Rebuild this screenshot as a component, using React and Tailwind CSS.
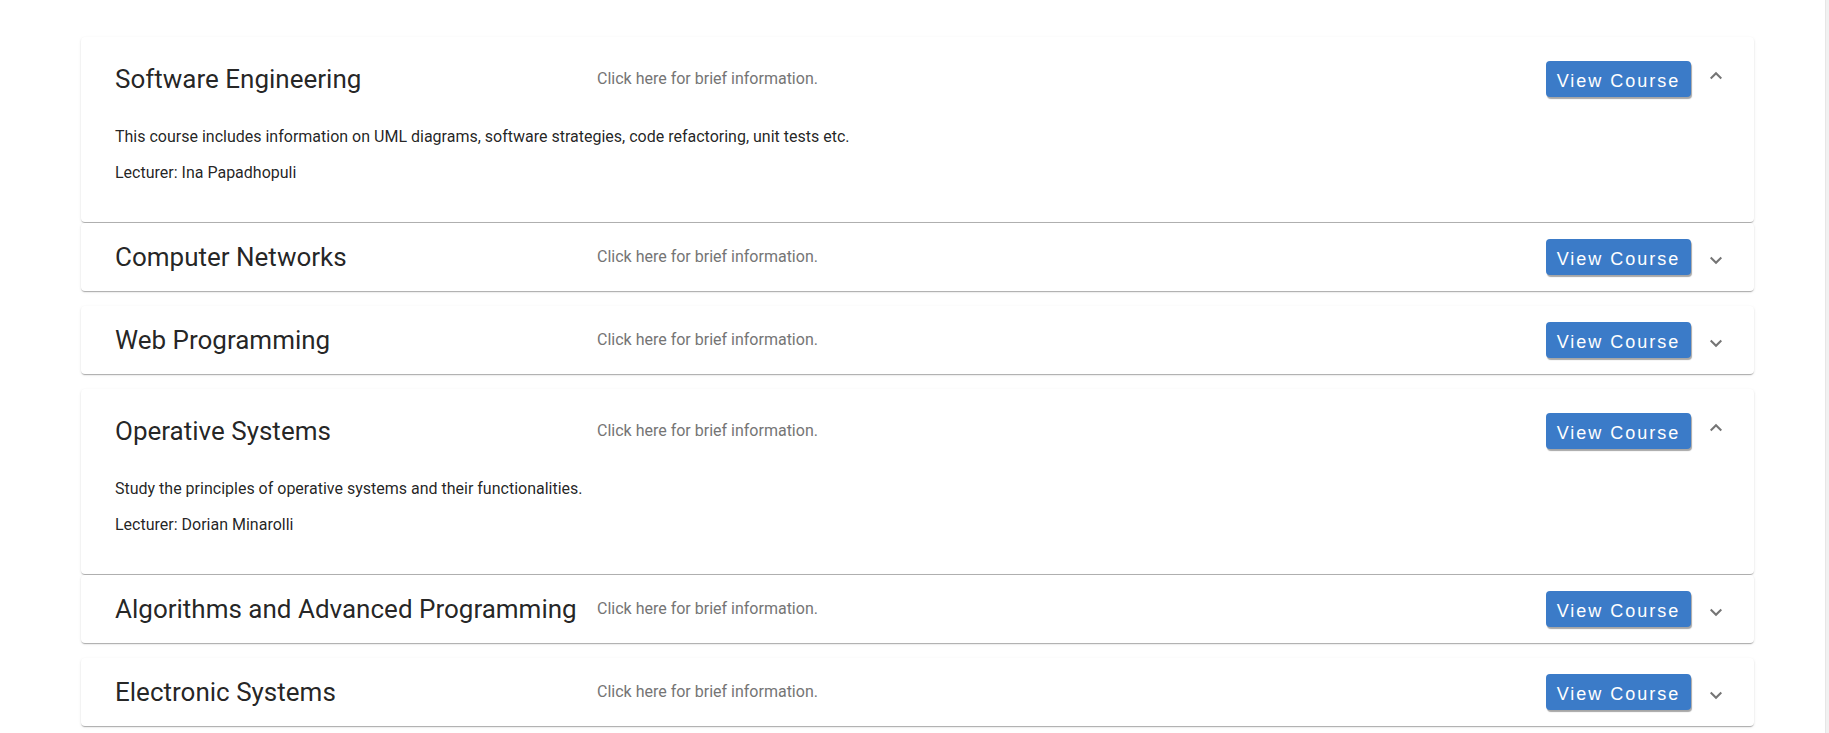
import React from "react";

const courses = [
  {
    title: "Software Engineering",
    open: true,
    description:
      "This course includes information on UML diagrams, software strategies, code refactoring, unit tests etc.",
    lecturer: "Ina Papadhopuli",
  },
  { title: "Computer Networks", open: false },
  { title: "Web Programming", open: false },
  {
    title: "Operative Systems",
    open: true,
    description: "Study the principles of operative systems and their functionalities.",
    lecturer: "Dorian Minarolli",
  },
  { title: "Algorithms and Advanced Programming", open: false },
  { title: "Electronic Systems", open: false },
];

function Chevron({ up }) {
  return (
    <svg viewBox="0 0 24 24" className="w-6 h-6 fill-[#757575] shrink-0">
      {up ? (
        <path d="M16.59 12.21 12 7.63 7.41 12.21 6 10.8l6-6 6 6z" />
      ) : (
        <path d="M16.59 11.79 12 16.37 7.41 11.79 6 13.2l6 6 6-6z" />
      )}
    </svg>
  );
}

function CourseCard({ course, first, afterOpen }) {
  return (
    <div
      className={
        "bg-white rounded-[4px] shadow-[0_2px_1px_-1px_rgba(0,0,0,0.18),0_1px_1px_0_rgba(0,0,0,0.12),0_1px_3px_0_rgba(0,0,0,0.1)] " +
        (first ? "" : afterOpen ? "mt-px" : "mt-[15px]")
      }
    >
      <div
        className={
          "flex items-center pl-[34px] pr-[26px] " + (course.open ? "h-[84px]" : "h-[68px]")
        }
      >
        <div className="w-[482px] shrink-0 text-[26px] leading-8 text-[rgba(0,0,0,0.87)] whitespace-nowrap">
          {course.title}
        </div>
        <div className="flex-1 text-[16px] text-[#757575]">Click here for brief information.</div>
        <button className="h-[36px] w-[145px] pt-[5px] rounded-[4px] bg-[#3b7bc8] text-white text-[18px] tracking-[2px] font-['Liberation_Sans',Arial,sans-serif] shadow-[1px_2px_1px_rgba(0,0,0,0.35)] mr-[13px]">
          View Course
        </button>
        <Chevron up={course.open} />
      </div>
      {course.open && (
        <div className="pl-[34px] pr-[26px] pt-[4px] pb-[37px] text-[16px] leading-6 text-[rgba(0,0,0,0.87)] flex flex-col gap-[12px]">
          <p>{course.description}</p>
          <p>Lecturer: {course.lecturer}</p>
        </div>
      )}
    </div>
  );
}

export default function App() {
  return (
    <div className="flex min-h-[733px] bg-white font-['Roboto','Liberation_Sans',sans-serif]">
      <div className="flex-1 pt-[37px] pl-[81px] pb-4">
        <div className="w-[1673px] flex flex-col">
          {courses.map((c, i) => (
            <CourseCard
              key={c.title}
              course={c}
              first={i === 0}
              afterOpen={i > 0 && courses[i - 1].open}
            />
          ))}
        </div>
      </div>
      <div className="w-[4px] bg-[#f1f1f1] border-l border-[#e6e6e6]" />
    </div>
  );
}
